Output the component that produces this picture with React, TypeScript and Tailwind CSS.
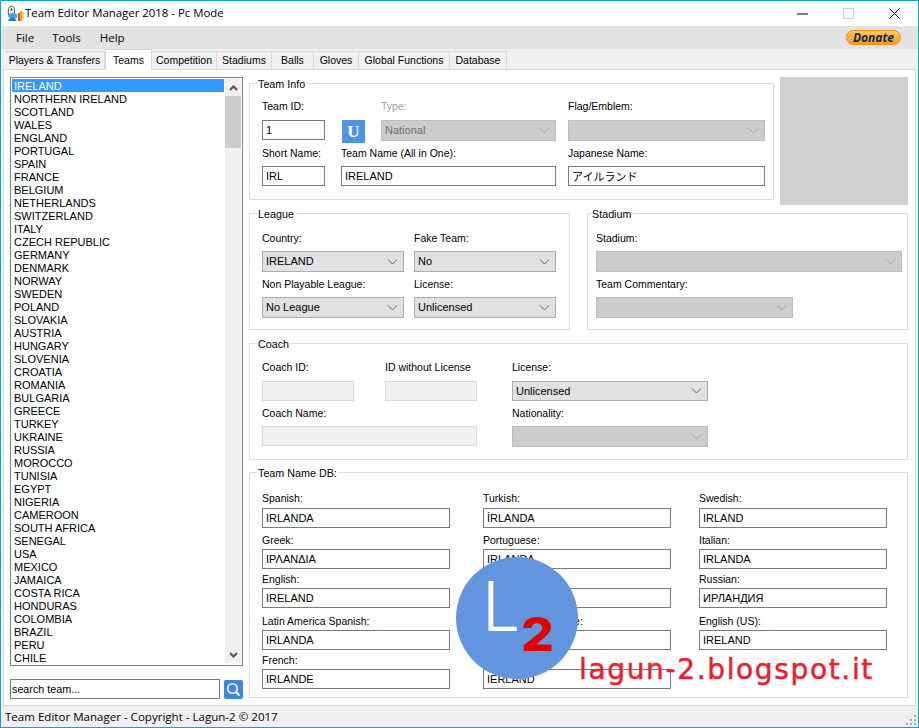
import type { ReactNode } from 'react'

const teams = [
  'IRELAND', 'NORTHERN IRELAND', 'SCOTLAND', 'WALES', 'ENGLAND', 'PORTUGAL', 'SPAIN', 'FRANCE', 'BELGIUM',
  'NETHERLANDS', 'SWITZERLAND', 'ITALY', 'CZECH REPUBLIC', 'GERMANY', 'DENMARK', 'NORWAY', 'SWEDEN', 'POLAND',
  'SLOVAKIA', 'AUSTRIA', 'HUNGARY', 'SLOVENIA', 'CROATIA', 'ROMANIA', 'BULGARIA', 'GREECE', 'TURKEY', 'UKRAINE',
  'RUSSIA', 'MOROCCO', 'TUNISIA', 'EGYPT', 'NIGERIA', 'CAMEROON', 'SOUTH AFRICA', 'SENEGAL', 'USA', 'MEXICO',
  'JAMAICA', 'COSTA RICA', 'HONDURAS', 'COLOMBIA', 'BRAZIL', 'PERU', 'CHILE',
]

const tabs = [
  { name: 'Players & Transfers', w: 'w-[100px]' },
  { name: 'Teams', w: 'w-[47px]', active: true },
  { name: 'Competition', w: 'w-[65px]' },
  { name: 'Stadiums', w: 'w-[55px]' },
  { name: 'Balls', w: 'w-[42px]' },
  { name: 'Gloves', w: 'w-[45px]' },
  { name: 'Global Functions', w: 'w-[91px]' },
  { name: 'Database', w: 'w-[57px]' },
]

const dbRows = [
  { mt: 'mt-[12px]', gap: 'gap-[3px]', cells: [['Spanish:', 'IRLANDA'], ['Turkish:', 'İRLANDA'], ['Swedish:', 'IRLAND']] },
  { mt: 'mt-[5px]', gap: 'gap-[2px]', cells: [['Greek:', 'ΙΡΛΑΝΔΙΑ'], ['Portuguese:', 'IRLANDA'], ['Italian:', 'IRLANDA']] },
  { mt: 'mt-[3px]', gap: 'gap-[2px]', cells: [['English:', 'IRELAND'], ['German:', 'IRLAND'], ['Russian:', 'ИРЛАНДИЯ']] },
  { mt: 'mt-[6px]', gap: 'gap-[2px]', cells: [['Latin America Spanish:', 'IRLANDA'], ['Brazilian Portuguese:', 'IRLANDA'], ['English (US):', 'IRELAND']] },
  { mt: 'mt-[3px]', gap: 'gap-[2px]', cells: [['French:', 'IRLANDE'], ['Dutch:', 'IERLAND']] },
]

function Chevron({ disabled }: { disabled?: boolean }) {
  return (
    <svg width="11" height="6" viewBox="0 0 11 6" fill="none" className={disabled ? 'text-[#a6a6a6]' : 'text-[#5f5f5f]'}>
      <path d="M1 .5l4.5 4.5L10 .5" stroke="currentColor" />
    </svg>
  )
}

function Combo({ value, disabled, w, h = 'h-[21px]' }: { value?: string; disabled?: boolean; w: string; h?: string }) {
  return (
    <div
      className={`flex ${h} ${w} items-center justify-between border pl-[3px] pr-[5px] ${
        disabled ? 'border-[#bdbdbd] bg-[#cccccc] text-[#6d6d6d]' : 'border-[#adadad] bg-[#e1e1e1] text-black'
      }`}
    >
      <span>{value}</span>
      <Chevron disabled={disabled} />
    </div>
  )
}

function TextBox({ value, w }: { value: string; w: string }) {
  return <input readOnly value={value} className={`h-[20px] ${w} border border-[#7a7a7a] bg-white px-[3px] text-black outline-none`} />
}

function EmptyBox({ w }: { w: string }) {
  return <div className={`h-[20px] ${w} border border-[#d9d9d9] bg-[#f0f0f0]`} />
}

function Field({ label, gap, className = '', muted, children }: { label: string; gap: string; className?: string; muted?: boolean; children: ReactNode }) {
  return (
    <div className={`flex flex-col ${gap} ${className}`}>
      <span className={`h-[14px] whitespace-nowrap text-[10.5px] leading-[15px] ${muted ? 'text-[#a0a0a0]' : ''}`}>{label}</span>
      {children}
    </div>
  )
}

function Group({ title, className, children }: { title: string; className: string; children: ReactNode }) {
  return (
    <section className={`border border-[#dcdcdc] pl-[12px] ${className}`}>
      <h2 className="-mt-[8px] -ml-[5px] h-[14px] w-fit bg-white px-[1px] text-[10.75px] leading-[16px]">{title}</h2>
      {children}
    </section>
  )
}

function AppIcon() {
  return (
    <svg width="18" height="18" viewBox="0 0 18 18">
      <path d="M4 1.5c2.5-1 4.5.5 4.5 3v6l-5 1.5C2 9 1.5 3 4 1.5z" fill="#e8e8e8" stroke="#555" />
      <circle cx="5.5" cy="4.5" r="1" fill="#333" />
      <ellipse cx="7" cy="11" rx="4.5" ry="3" fill="#49a5e0" />
      <path d="M2 15l5-3 4 4H3z" fill="#2f6fb5" />
      <rect x="12" y="8" width="2" height="8" fill="#e2502a" />
      <rect x="14" y="6" width="2" height="10" fill="#f3a022" />
      <rect x="16" y="7" width="1.5" height="7" fill="#f7c948" />
    </svg>
  )
}

export default function App() {
  return (
    <div className="relative flex h-[728px] w-[919px] flex-col overflow-hidden border border-[#17a3c4] bg-[#f0f0f0] text-[11px] text-black [font-family:'Liberation_Sans','Noto_Sans_CJK_JP',sans-serif]">
      {/* title bar */}
      <header className="flex h-[25px] shrink-0 items-center bg-white pl-[5px]">
        <AppIcon />
        <span className="ml-[1px] pb-[2px] text-[11.4px] [font-family:'Open_Sans',sans-serif]">Team Editor Manager 2018 - Pc Mode</span>
        <div className="ml-auto flex items-center">
          <svg width="11" height="11" viewBox="0 0 11 11" className="mr-[35px]"><path d="M0 6h11" stroke="#000" /></svg>
          <svg width="11" height="11" viewBox="0 0 11 11" className="mr-[35px]"><rect x=".5" y=".5" width="10" height="10" fill="none" stroke="#cfcfcf" /></svg>
          <svg width="11" height="11" viewBox="0 0 11 11" className="mr-[18px]"><path d="M.5.5l10 10M10.5.5l-10 10" stroke="#000" /></svg>
        </div>
      </header>

      {/* menu */}
      <nav className="flex h-[23px] shrink-0 items-center bg-[#e2e2e2] pl-[15px] text-[11.5px] [font-family:'Open_Sans',sans-serif]">
        <span>File</span>
        <span className="ml-[18px]">Tools</span>
        <span className="ml-[19px]">Help</span>
        <div className="ml-auto mr-[17px] flex h-[15px] w-[55px] items-center justify-center rounded-full border border-[#e98f16] bg-gradient-to-b from-[#ffc956] to-[#f59c1a] text-[12px] font-bold italic text-[#10245e]">
          Donate
        </div>
      </nav>

      {/* tabs */}
      <div className="flex h-[21px] shrink-0 items-end whitespace-nowrap pl-[4px] text-[10.5px]">
        {tabs.map((t) =>
          t.active ? (
            <div key={t.name} className={`relative z-10 flex h-[21px] ${t.w} items-center justify-center border border-b-0 border-[#d9d9d9] bg-white pt-[1px]`}>
              {t.name}
            </div>
          ) : (
            <div key={t.name} className={`flex h-[19px] ${t.w} items-center justify-center border-y border-r border-[#d9d9d9] bg-[#f0f0f0] pt-[1px]`}>
              {t.name}
            </div>
          ),
        )}
      </div>

      {/* panel */}
      <main className="-mt-[1px] ml-[2px] flex h-[637px] w-[913px] shrink-0 gap-[6px] border border-[#d9d9d9] bg-white pl-[6px] pt-[7px]">
        <div className="flex w-[233px] shrink-0 flex-col">
          <div className="flex h-[589px] border border-[#828282] pl-[1px] pt-[1px]">
            <ul className="w-[212px] leading-[15px]">
              {teams.map((t, i) => (
                <li key={t} className={`h-[13px] pl-[2px] ${i === 0 ? 'bg-[#3399ff] text-white' : ''}`}>{t}</li>
              ))}
            </ul>
            <div className="ml-auto mr-[1px] flex h-[584px] w-[16px] flex-col bg-[#f0f0f0]">
              <div className="flex h-[17px] items-center justify-center">
                <svg width="9" height="6" viewBox="0 0 9 6" fill="none"><path d="M1 5l3.5-3.5L8 5" stroke="#555" strokeWidth="2" /></svg>
              </div>
              <div className="h-[52px] bg-[#cdcdcd]" />
              <div className="mt-auto flex h-[17px] items-center justify-center">
                <svg width="9" height="6" viewBox="0 0 9 6" fill="none"><path d="M1 1l3.5 3.5L8 1" stroke="#555" strokeWidth="2" /></svg>
              </div>
            </div>
          </div>
          <div className="mt-[13px] flex items-center justify-between">
            <input readOnly value="search team..." className="h-[20px] w-[210px] border border-[#7a7a7a] bg-white px-[1px] text-[10.75px] outline-none" />
            <div className="flex h-[19px] w-[19px] items-center justify-center rounded-[2px] bg-[#3f87dd]">
              <svg width="15" height="15" viewBox="0 0 15 15" fill="none" stroke="#fff">
                <circle cx="6.5" cy="6.5" r="4.7" strokeWidth="1.6" />
                <path d="M10 10l3.5 3.5" strokeWidth="2.2" />
              </svg>
            </div>
          </div>
        </div>

        <div className="flex w-[659px] flex-col">
          <div className="flex h-[129px] items-start">
            <Group title="Team Info" className="mt-[6px] h-[117px] w-[525px]">
              <div className="mt-[9px] flex">
                <Field label="Team ID:" gap="gap-[7px]"><TextBox value="1" w="w-[63px]" /></Field>
                <div className="-mb-[2px] ml-[17px] flex h-[23px] w-[23px] items-center justify-center self-end bg-[#4e94e4] text-[17px] font-bold text-white [font-family:'Liberation_Serif',serif]">U</div>
                <Field label="Type:" muted gap="gap-[7px]" className="ml-[16px]"><Combo value="National" disabled w="w-[175px]" /></Field>
                <Field label="Flag/Emblem:" gap="gap-[7px]" className="ml-[12px]"><Combo disabled w="w-[197px]" /></Field>
              </div>
              <div className="mt-[5px] flex">
                <Field label="Short Name:" gap="gap-[6px]"><TextBox value="IRL" w="w-[63px]" /></Field>
                <Field label="Team Name (All in One):" gap="gap-[6px]" className="ml-[16px]"><TextBox value="IRELAND" w="w-[215px]" /></Field>
                <Field label="Japanese Name:" gap="gap-[6px]" className="ml-[12px]"><TextBox value="アイルランド" w="w-[197px]" /></Field>
              </div>
            </Group>
            <div className="ml-[6px] h-[128px] w-[128px] bg-[#d0d0d0]" />
          </div>

          <div className="mt-[7px] flex gap-[17px]">
            <Group title="League" className="h-[117px] w-[321px]">
              <div className="mt-[11px] flex gap-[10px]">
                <Field label="Country:" gap="gap-[6px]"><Combo value="IRELAND" w="w-[142px]" /></Field>
                <Field label="Fake Team:" gap="gap-[6px]"><Combo value="No" w="w-[142px]" /></Field>
              </div>
              <div className="mt-[5px] flex gap-[10px]">
                <Field label="Non Playable League:" gap="gap-[6px]"><Combo value="No League" w="w-[142px]" /></Field>
                <Field label="License:" gap="gap-[6px]"><Combo value="Unlicensed" w="w-[142px]" /></Field>
              </div>
            </Group>
            <Group title="Stadium" className="h-[117px] w-[321px] !pl-[8px]">
              <Field label="Stadium:" gap="gap-[6px]" className="mt-[11px]"><Combo disabled w="w-[306px]" /></Field>
              <Field label="Team Commentary:" gap="gap-[6px]" className="mt-[5px]"><Combo disabled w="w-[197px]" /></Field>
            </Group>
          </div>

          <Group title="Coach" className="mt-[13px] h-[117px] w-[659px]">
            <div className="mt-[10px] flex">
              <Field label="Coach ID:" gap="gap-[7px]"><EmptyBox w="w-[92px]" /></Field>
              <Field label="ID without License" gap="gap-[7px]" className="ml-[31px]"><EmptyBox w="w-[92px]" /></Field>
              <Field label="License:" gap="gap-[7px]" className="ml-[35px]"><Combo value="Unlicensed" w="w-[196px]" h="h-[20px]" /></Field>
            </div>
            <div className="mt-[5px] flex">
              <Field label="Coach Name:" gap="gap-[6px]"><EmptyBox w="w-[215px]" /></Field>
              <Field label="Nationality:" gap="gap-[6px]" className="ml-[35px]"><Combo disabled w="w-[196px]" /></Field>
            </div>
          </Group>

          <Group title="Team Name DB:" className="mt-[12px] h-[226px] w-[659px]">
            {dbRows.map((row) => (
              <div key={row.cells[0][0]} className={`grid grid-cols-[221px_216px_188px] ${row.mt}`}>
                {row.cells.map(([label, value]) => (
                  <Field key={label} label={label} gap={row.gap}><TextBox value={value} w="w-[188px]" /></Field>
                ))}
              </div>
            ))}
          </Group>
        </div>
      </main>

      {/* status bar */}
      <footer className="relative flex h-[21px] shrink-0 items-center pl-[4px] text-[11.55px] [font-family:'Open_Sans',sans-serif]">
        Team Editor Manager - Copyright - Lagun-2 © 2017
        <svg width="11" height="11" viewBox="0 0 11 11" className="absolute bottom-[1px] right-[1px]" fill="#a8a8a8">
          <rect x="8" y="0" width="2" height="2" />
          <rect x="4" y="4" width="2" height="2" />
          <rect x="8" y="4" width="2" height="2" />
          <rect x="0" y="8" width="2" height="2" />
          <rect x="4" y="8" width="2" height="2" />
          <rect x="8" y="8" width="2" height="2" />
        </svg>
      </footer>

      {/* watermark */}
      <div className="absolute left-[455px] top-[556px] h-[122px] w-[122px] rounded-full bg-[#6395de]">
        <span className="absolute left-[26px] top-[9px] text-[68px] font-light leading-[80px] text-white [font-family:Inter,sans-serif]">L</span>
        <span className="absolute left-[65px] top-[54px] origin-left scale-x-[1.12] text-[46px] font-extrabold leading-[46px] text-[#e00000] [font-family:Inter,sans-serif]">2</span>
      </div>
      <span className="absolute left-[578px] top-[651px] text-[28px] leading-[36px] tracking-[1.65px] text-[#ed1c2e] [-webkit-text-stroke:0.5px_#ed1c2e] [font-family:'DejaVu_Sans',sans-serif]">lagun-2.blogspot.it</span>
    </div>
  )
}
